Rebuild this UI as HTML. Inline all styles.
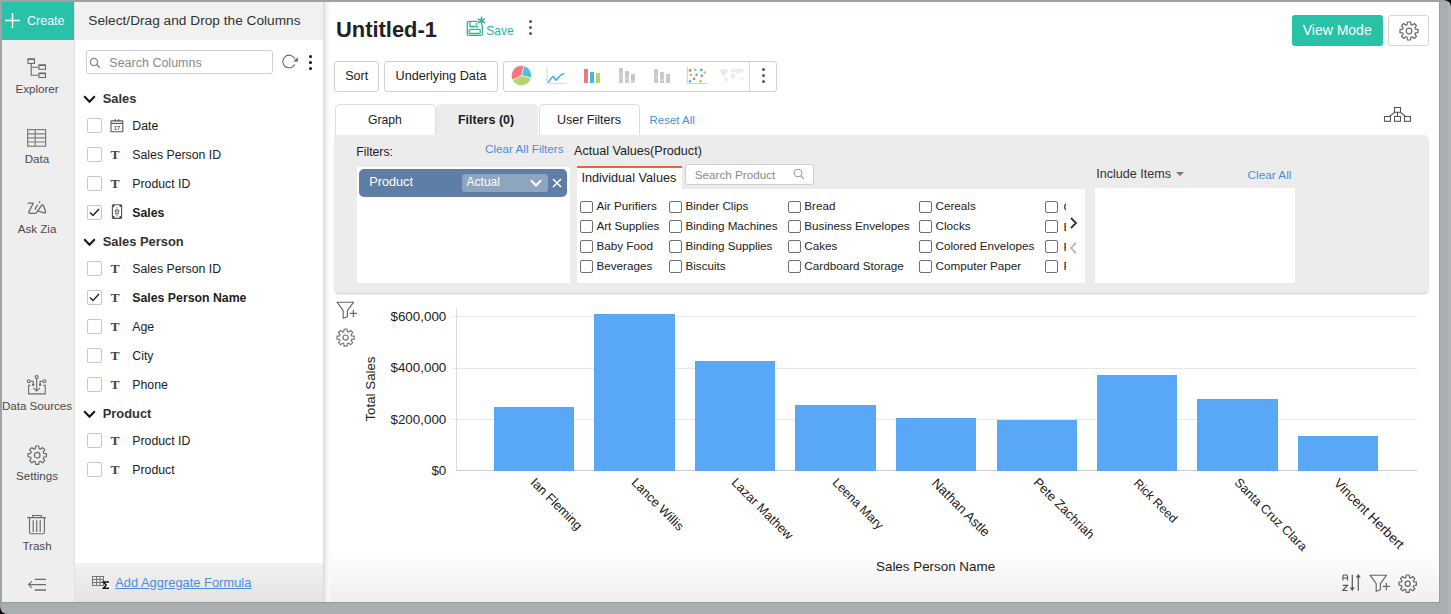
<!DOCTYPE html>
<html><head><meta charset="utf-8">
<style>
*{margin:0;padding:0;box-sizing:border-box}
html,body{width:1451px;height:614px;overflow:hidden}
body{background:#a8aeb1;position:relative;font-family:"Liberation Sans",sans-serif;color:#222}
.a{position:absolute}
.t{position:absolute;line-height:1;white-space:nowrap}
</style></head><body>
<div class="a" style="left:0px;top:0px;width:1451px;height:2px;background:#9da2a5"></div>
<div class="a" style="left:0px;top:0px;width:2px;height:614px;background:#9da2a5"></div>
<div class="a" style="left:1439px;top:2px;width:1px;height:601px;background:#9a9fa2"></div>
<div class="a" style="left:2px;top:602px;width:1438px;height:1px;background:#969c9f"></div>
<div class="a" style="left:1448px;top:2px;width:3px;height:612px;background:#aeb4b7"></div>
<div class="a" style="left:2px;top:2px;width:1437px;height:600px;background:#fff"></div>
<svg class="a" style="left:1441px;top:0px" width="10" height="10" viewBox="0 0 10 10"><path d="M3 0H10V7Q10 1 3 0Z" fill="#000"/></svg>
<svg class="a" style="left:0px;top:604px" width="10" height="10" viewBox="0 0 10 10"><path d="M0 3V10H7Q1 10 0 3Z" fill="#000"/></svg>
<div class="a" style="left:2px;top:2px;width:72px;height:600px;background:#eeeeee"></div>
<div class="a" style="left:74px;top:2px;width:1px;height:600px;background:#e0e0e0"></div>
<div class="a" style="left:2px;top:2px;width:72px;height:38px;background:#27c2a8"></div>
<svg class="a" style="left:5px;top:13px" width="15" height="15" viewBox="0 0 15 15"><path d="M7.5 0V15M0 7.5H15" stroke="#fff" stroke-width="1.5"/></svg>
<div class="t" style="left:27.00px;top:15.00px;font-size:12.5px;color:#fff;">Create</div>
<div class="t" style="left:-63.00px;width:200px;text-align:center;top:83.00px;font-size:11.6px;color:#4a4a4a;">Explorer</div>
<div class="t" style="left:-63.00px;width:200px;text-align:center;top:153.00px;font-size:11.6px;color:#4a4a4a;">Data</div>
<div class="t" style="left:-63.00px;width:200px;text-align:center;top:223.00px;font-size:11.6px;color:#4a4a4a;">Ask Zia</div>
<div class="t" style="left:-63.00px;width:200px;text-align:center;top:400.00px;font-size:11.6px;color:#4a4a4a;">Data Sources</div>
<div class="t" style="left:-63.00px;width:200px;text-align:center;top:470.00px;font-size:11.6px;color:#4a4a4a;">Settings</div>
<div class="t" style="left:-63.00px;width:200px;text-align:center;top:540.00px;font-size:11.6px;color:#4a4a4a;">Trash</div>
<svg class="a" style="left:22px;top:52px" width="30" height="30" viewBox="22 52 30 30" fill="none" stroke="#6b6b6b" stroke-width="1.1"><rect x="27.9" y="59" width="6.6" height="4.4"/><rect x="38.9" y="65" width="6.6" height="4.3"/><rect x="38.9" y="73.2" width="6.6" height="4.3"/><path d="M27.9 59.3H34.5M38.9 65.3H45.5M38.9 73.5H45.5" stroke-width="1.6"/><path d="M31.2 63.4V75.3H38.9M31.2 67.2H38.9"/></svg>
<svg class="a" style="left:22px;top:122px" width="30" height="30" viewBox="22 122 30 30" fill="none" stroke="#7c7c7c" stroke-width="1.2"><rect x="27.6" y="129.6" width="18" height="16.6"/><path d="M27.6 133.8H45.6M27.6 137.9H45.6M27.6 142H45.6M35.2 129.6V146.2"/></svg>
<svg class="a" style="left:0px;top:0px" width="60" height="230" viewBox="0 0 60 230" fill="none" stroke="#6b6b6b" stroke-width="1.3" stroke-linejoin="round" stroke-linecap="round"><path d="M28.2 203.2H33.3L28.9 211.6Q28.2 213.3 30.2 213.3H34.8Q36.3 213.3 37.3 211.6L41.6 205.3Q42.8 204 43.6 205.8L45.5 211.5Q45.9 213.4 44 212.9L37.9 211"/><path d="M35.6 209.3Q35.1 208.5 35.8 207.6L37.6 205"/><circle cx="39.5" cy="202.2" r="0.9" fill="#6b6b6b" stroke="none"/></svg>
<svg class="a" style="left:22px;top:370px" width="30" height="30" viewBox="22 370 30 30" fill="none" stroke="#6b6b6b" stroke-width="1.1"><circle cx="36.65" cy="377.1" r="1.5"/><circle cx="28.8" cy="381.3" r="1.5"/><circle cx="44.5" cy="381.3" r="1.5"/><path d="M36.65 378.6V391M33.4 387.9L36.65 391.1L39.9 387.9"/><path d="M30.3 381.3H33.2V384.7M43 381.3H40.1V384.7"/><circle cx="33.2" cy="384.8" r="0.7" fill="#6b6b6b"/><circle cx="40.1" cy="384.8" r="0.7" fill="#6b6b6b"/><path d="M30.4 385.4H28.6V393.9H45.2V385.4H43.4"/></svg>
<svg class="a" style="left:25.60px;top:443.60px" width="22.40" height="22.40" viewBox="0 0 22.40 22.40" fill="none" stroke="#6b6b6b" stroke-width="1.2" stroke-linejoin="round"><path d="M9.30 4.67L9.65 2.00L12.75 2.00L13.10 4.67A6.8 6.8 0 0 1 14.47 5.24L16.61 3.60L18.80 5.79L17.16 7.93A6.8 6.8 0 0 1 17.73 9.30L20.40 9.65L20.40 12.75L17.73 13.10A6.8 6.8 0 0 1 17.16 14.47L18.80 16.61L16.61 18.80L14.47 17.16A6.8 6.8 0 0 1 13.10 17.73L12.75 20.40L9.65 20.40L9.30 17.73A6.8 6.8 0 0 1 7.93 17.16L5.79 18.80L3.60 16.61L5.24 14.47A6.8 6.8 0 0 1 4.67 13.10L2.00 12.75L2.00 9.65L4.67 9.30A6.8 6.8 0 0 1 5.24 7.93L3.60 5.79L5.79 3.60L7.93 5.24A6.8 6.8 0 0 1 9.30 4.67Z"/><circle cx="11.2" cy="11.2" r="2.8"/></svg>
<svg class="a" style="left:22px;top:508px" width="30" height="30" viewBox="22 508 30 30" fill="none" stroke="#6b6b6b" stroke-width="1.1"><path d="M27.1 517.6H45.9M32.6 517.4V515.5H41.2V517.4M29.5 517.6V532.3Q29.5 533.8 31 533.8H43Q44.4 533.8 44.4 532.3V517.6"/><path d="M33.2 520.2V531.9M36.7 520.2V531.9M40.2 520.2V531.9" stroke-width="1.2"/></svg>
<svg class="a" style="left:22px;top:570px" width="30" height="30" viewBox="22 570 30 30" fill="none" stroke="#6b6b6b" stroke-width="1.2"><path d="M31.8 581.3L28.6 584.6L31.8 587.9M28.6 584.6H46M34.8 579.3H46"/><path d="M34.8 590H46" stroke-width="1.5"/></svg>
<div class="a" style="left:75px;top:2px;width:248px;height:38px;background:#f1f1f1"></div>
<div class="t" style="left:88.30px;top:14.00px;font-size:13.7px;color:#333;">Select/Drag and Drop the Columns</div>
<div class="a" style="left:86px;top:50px;width:187px;height:24px;border:1px solid #d0d0d0;border-radius:3px;background:#fff"></div>
<svg class="a" style="left:89px;top:57px" width="12" height="12" viewBox="0 0 12 12" fill="none" stroke="#888" stroke-width="1.4"><circle cx="5" cy="5" r="3.6"/><path d="M7.6 7.6L10.8 10.8"/></svg>
<div class="t" style="left:109.30px;top:57.00px;font-size:12.5px;color:#8a8a8a;">Search Columns</div>
<svg class="a" style="left:275px;top:50px" width="30" height="25" viewBox="275 50 30 25" fill="none" stroke="#666" stroke-width="1.1"><path d="M294.66 64.46A6.3 6.3 0 1 1 294.94 59.14"/><path d="M298 57.2L297.8 61.8L293.2 61.6Z" fill="#666" stroke="none"/></svg>
<div class="a" style="left:308.5px;top:54.5px;width:3.25px;height:3.25px;background:#111;border-radius:50%"></div>
<div class="a" style="left:308.5px;top:60.5px;width:3.25px;height:3.25px;background:#111;border-radius:50%"></div>
<div class="a" style="left:308.5px;top:66.5px;width:3.25px;height:3.25px;background:#111;border-radius:50%"></div>
<svg class="a" style="left:82.5px;top:95.0px" width="13" height="9" viewBox="0 0 13 9" fill="none" stroke="#111" stroke-width="2"><path d="M1.2 1.3L6.5 6.8L11.8 1.3"/></svg>
<div class="t" style="left:102.70px;top:93.00px;font-size:12.9px;color:#333;font-weight:bold;">Sales</div>
<svg class="a" style="left:82.5px;top:238.0px" width="13" height="9" viewBox="0 0 13 9" fill="none" stroke="#111" stroke-width="2"><path d="M1.2 1.3L6.5 6.8L11.8 1.3"/></svg>
<div class="t" style="left:102.70px;top:236.00px;font-size:12.9px;color:#333;font-weight:bold;">Sales Person</div>
<svg class="a" style="left:82.5px;top:410.0px" width="13" height="9" viewBox="0 0 13 9" fill="none" stroke="#111" stroke-width="2"><path d="M1.2 1.3L6.5 6.8L11.8 1.3"/></svg>
<div class="t" style="left:102.70px;top:408.00px;font-size:12.9px;color:#333;font-weight:bold;">Product</div>
<div class="a" style="left:87px;top:118px;width:15px;height:15px;border:1px solid #c8c8c8;border-radius:2px;background:#fff"></div>
<svg class="a" style="left:108px;top:118px" width="17" height="16" viewBox="0 0 17 16" fill="none" stroke="#555" stroke-width="1.1"><rect x="3" y="2.9" width="11.8" height="10.9" rx="0.6"/><path d="M3 5.4H14.8"/><path d="M7.3 1.2V3M10.5 1.2V3" stroke-width="1.3"/><text x="8.9" y="12.2" font-size="5.6" font-weight="bold" text-anchor="middle" fill="#555" stroke="none" font-family="Liberation Sans">17</text></svg>
<div class="t" style="left:132.30px;top:120.00px;font-size:12.3px;color:#222;">Date</div>
<div class="a" style="left:87px;top:147px;width:15px;height:15px;border:1px solid #c8c8c8;border-radius:2px;background:#fff"></div>
<div class="t" style="left:110.5px;top:148px;font-family:'Liberation Serif',serif;font-weight:bold;font-size:13.5px;color:#444">T</div>
<div class="t" style="left:132.30px;top:149.00px;font-size:12.3px;color:#222;">Sales Person ID</div>
<div class="a" style="left:87px;top:176px;width:15px;height:15px;border:1px solid #c8c8c8;border-radius:2px;background:#fff"></div>
<div class="t" style="left:110.5px;top:177px;font-family:'Liberation Serif',serif;font-weight:bold;font-size:13.5px;color:#444">T</div>
<div class="t" style="left:132.30px;top:178.00px;font-size:12.3px;color:#222;">Product ID</div>
<div class="a" style="left:87px;top:205px;width:15px;height:15px;border:1px solid #c8c8c8;border-radius:2px;background:#fff"></div>
<svg class="a" style="left:89px;top:208px" width="11" height="9" viewBox="0 0 11 9" fill="none" stroke="#222" stroke-width="1.4"><path d="M1 4.5L4 7.5L10 1"/></svg>
<svg class="a" style="left:108px;top:202px" width="17" height="18" viewBox="0 0 17 18" fill="none" stroke="#555" stroke-width="1.1"><rect x="4.4" y="2.8" width="9.2" height="13.6" rx="0.8"/><circle cx="5.6" cy="4" r="1.1" fill="#444" stroke="none"/><circle cx="12.4" cy="4" r="1.1" fill="#444" stroke="none"/><circle cx="5.6" cy="15.2" r="1.1" fill="#444" stroke="none"/><circle cx="12.4" cy="15.2" r="1.1" fill="#444" stroke="none"/><ellipse cx="9" cy="8.9" rx="1.9" ry="1.1"/><path d="M7 11.8H11M9 5.2V6.6M9 13.3V14.6"/></svg>
<div class="t" style="left:132.30px;top:207.00px;font-size:12.3px;color:#222;font-weight:bold;">Sales</div>
<div class="a" style="left:87px;top:261px;width:15px;height:15px;border:1px solid #c8c8c8;border-radius:2px;background:#fff"></div>
<div class="t" style="left:110.5px;top:262px;font-family:'Liberation Serif',serif;font-weight:bold;font-size:13.5px;color:#444">T</div>
<div class="t" style="left:132.30px;top:263.00px;font-size:12.3px;color:#222;">Sales Person ID</div>
<div class="a" style="left:87px;top:290px;width:15px;height:15px;border:1px solid #c8c8c8;border-radius:2px;background:#fff"></div>
<svg class="a" style="left:89px;top:293px" width="11" height="9" viewBox="0 0 11 9" fill="none" stroke="#222" stroke-width="1.4"><path d="M1 4.5L4 7.5L10 1"/></svg>
<div class="t" style="left:110.5px;top:291px;font-family:'Liberation Serif',serif;font-weight:bold;font-size:13.5px;color:#444">T</div>
<div class="t" style="left:132.30px;top:292.00px;font-size:12.3px;color:#222;font-weight:bold;">Sales Person Name</div>
<div class="a" style="left:87px;top:319px;width:15px;height:15px;border:1px solid #c8c8c8;border-radius:2px;background:#fff"></div>
<div class="t" style="left:110.5px;top:320px;font-family:'Liberation Serif',serif;font-weight:bold;font-size:13.5px;color:#444">T</div>
<div class="t" style="left:132.30px;top:321.00px;font-size:12.3px;color:#222;">Age</div>
<div class="a" style="left:87px;top:348px;width:15px;height:15px;border:1px solid #c8c8c8;border-radius:2px;background:#fff"></div>
<div class="t" style="left:110.5px;top:349px;font-family:'Liberation Serif',serif;font-weight:bold;font-size:13.5px;color:#444">T</div>
<div class="t" style="left:132.30px;top:350.00px;font-size:12.3px;color:#222;">City</div>
<div class="a" style="left:87px;top:377px;width:15px;height:15px;border:1px solid #c8c8c8;border-radius:2px;background:#fff"></div>
<div class="t" style="left:110.5px;top:378px;font-family:'Liberation Serif',serif;font-weight:bold;font-size:13.5px;color:#444">T</div>
<div class="t" style="left:132.30px;top:379.00px;font-size:12.3px;color:#222;">Phone</div>
<div class="a" style="left:87px;top:433px;width:15px;height:15px;border:1px solid #c8c8c8;border-radius:2px;background:#fff"></div>
<div class="t" style="left:110.5px;top:434px;font-family:'Liberation Serif',serif;font-weight:bold;font-size:13.5px;color:#444">T</div>
<div class="t" style="left:132.30px;top:435.00px;font-size:12.3px;color:#222;">Product ID</div>
<div class="a" style="left:87px;top:462px;width:15px;height:15px;border:1px solid #c8c8c8;border-radius:2px;background:#fff"></div>
<div class="t" style="left:110.5px;top:463px;font-family:'Liberation Serif',serif;font-weight:bold;font-size:13.5px;color:#444">T</div>
<div class="t" style="left:132.30px;top:464.00px;font-size:12.3px;color:#222;">Product</div>
<div class="a" style="left:75px;top:563px;width:248px;height:39px;background:linear-gradient(#f2f2f2,#e3e3e3)"></div>
<svg class="a" style="left:92px;top:576px" width="18" height="13" viewBox="0 0 18 13" fill="none" stroke="#777" stroke-width="1"><rect x="0.5" y="0.5" width="11" height="9"/><path d="M0.5 3.5H11.5M0.5 6.5H11.5M4.5 0.5V9.5M8 0.5V9.5"/><path d="M17 6H11.5L14.2 9L11.5 12.3H17" stroke="#111" stroke-width="1.5" fill="#fff"/></svg>
<div class="t" style="left:115.20px;top:577.00px;font-size:12.9px;color:#4a8ee0;text-decoration:underline">Add Aggregate Formula</div>
<div class="t" style="left:336.00px;top:19.00px;font-size:21.9px;color:#222;font-weight:bold;">Untitled-1</div>
<svg class="a" style="left:462px;top:14px" width="28" height="26" viewBox="0 0 28 26" fill="none" stroke="#2bb59b" stroke-width="1.3" stroke-linecap="round"><path d="M15.3 7.4H6.8Q5.3 7.4 5.3 8.9V19.9Q5.3 21.4 6.8 21.4H18.8Q20.3 21.4 20.3 19.9V11.2"/><path d="M8 7.6V12.5H15.7"/><rect x="7.2" y="15.3" width="11" height="4.2" rx="1"/><circle cx="14.6" cy="10" r="0.9" fill="#2bb59b" stroke="none"/><path d="M19.5 3.3V10.3M16.5 5.1L22.5 8.5M16.5 8.5L22.5 5.1" stroke-width="1.6"/></svg>
<div class="t" style="left:486.20px;top:25.00px;font-size:12.1px;color:#2bb59b;">Save</div>
<div class="a" style="left:529.2px;top:20px;width:3.0px;height:3px;background:#555;border-radius:50%"></div>
<div class="a" style="left:529.2px;top:26px;width:3.0px;height:3px;background:#555;border-radius:50%"></div>
<div class="a" style="left:529.2px;top:32px;width:3.0px;height:3px;background:#555;border-radius:50%"></div>
<div class="a" style="left:1292px;top:15px;width:91px;height:31px;background:#27c2a8;border-radius:3px"></div>
<div class="t" style="left:1302.70px;top:23.00px;font-size:14px;color:#fff;">View Mode</div>
<div class="a" style="left:1388px;top:15px;width:41px;height:31px;border:1px solid #d4d4d4;border-radius:3px;background:#fff"></div>
<svg class="a" style="left:1397.50px;top:19.50px" width="22.00" height="22.00" viewBox="0 0 22.00 22.00" fill="none" stroke="#666" stroke-width="1.2" stroke-linejoin="round"><path d="M9.10 4.68L9.45 2.00L12.55 2.00L12.90 4.68A6.6 6.6 0 0 1 14.13 5.19L16.27 3.54L18.46 5.73L16.81 7.87A6.6 6.6 0 0 1 17.32 9.10L20.00 9.45L20.00 12.55L17.32 12.90A6.6 6.6 0 0 1 16.81 14.13L18.46 16.27L16.27 18.46L14.13 16.81A6.6 6.6 0 0 1 12.90 17.32L12.55 20.00L9.45 20.00L9.10 17.32A6.6 6.6 0 0 1 7.87 16.81L5.73 18.46L3.54 16.27L5.19 14.13A6.6 6.6 0 0 1 4.68 12.90L2.00 12.55L2.00 9.45L4.68 9.10A6.6 6.6 0 0 1 5.19 7.87L3.54 5.73L5.73 3.54L7.87 5.19A6.6 6.6 0 0 1 9.10 4.68Z"/><circle cx="11.0" cy="11.0" r="2.8"/></svg>
<div class="a" style="left:334px;top:61px;width:45px;height:30.5px;border:1px solid #d2d2d2;border-radius:3px;background:#fff"></div>
<div class="t" style="left:345.20px;top:70.00px;font-size:12.6px;color:#222;">Sort</div>
<div class="a" style="left:384px;top:61px;width:113.5px;height:30.5px;border:1px solid #d2d2d2;border-radius:3px;background:#fff"></div>
<div class="t" style="left:395.50px;top:70.00px;font-size:12.7px;color:#222;">Underlying Data</div>
<div class="a" style="left:503px;top:61px;width:274px;height:30.5px;border:1px solid #d2d2d2;border-radius:3px;background:#fff"></div>
<div class="a" style="left:749px;top:62px;width:1px;height:29px;background:#d8d8d8"></div>
<div class="a" style="left:761.5px;top:68px;width:3.0px;height:3px;background:#555;border-radius:50%"></div>
<div class="a" style="left:761.5px;top:74px;width:3.0px;height:3px;background:#555;border-radius:50%"></div>
<div class="a" style="left:761.5px;top:80px;width:3.0px;height:3px;background:#555;border-radius:50%"></div>
<svg class="a" style="left:511px;top:65px" width="21" height="21" viewBox="0 0 21 21"><path d="M10.5 10.5L12.92 0.80A10 10 0 0 1 20.11 13.26Z" fill="#4fc0da" stroke="#fff" stroke-width="0.6"/><path d="M10.5 10.5L20.11 13.26A10 10 0 0 1 1.67 15.19Z" fill="#b6d36b" stroke="#fff" stroke-width="0.6"/><path d="M10.5 10.5L1.67 15.19A10 10 0 0 1 12.92 0.80Z" fill="#ee7a7f" stroke="#fff" stroke-width="0.6"/></svg>
<svg class="a" style="left:546px;top:66px" width="21" height="19" viewBox="0 0 21 19" fill="none"><path d="M1 1V17.5H20.5" stroke="#dcdcdc" stroke-width="1.2"/><path d="M2.3 16L6.9 10.4L10.2 14.1L14.8 9L17.8 7.6" stroke="#45b9d8" stroke-width="1.6" stroke-linejoin="round" stroke-linecap="round"/></svg>
<div class="a" style="left:584px;top:68.5px;width:4px;height:14.5px;background:#ee7a7f"></div>
<div class="a" style="left:590px;top:71.8px;width:4px;height:11.200000000000003px;background:#45b9d8"></div>
<div class="a" style="left:596px;top:73.3px;width:4px;height:9.700000000000003px;background:#b6d36b"></div>
<div class="a" style="left:619px;top:68px;width:4px;height:15px;background:repeating-linear-gradient(#c8c8c8 0 1.6px,#dadada 1.6px 2.2px)"></div>
<div class="a" style="left:625px;top:71px;width:4px;height:12px;background:repeating-linear-gradient(#c8c8c8 0 1.6px,#dadada 1.6px 2.2px)"></div>
<div class="a" style="left:631px;top:74px;width:4px;height:9px;background:repeating-linear-gradient(#c8c8c8 0 1.6px,#dadada 1.6px 2.2px)"></div>
<div class="a" style="left:654px;top:68.5px;width:4px;height:14.200000000000003px;background:#c9c9c9"></div>
<div class="a" style="left:660px;top:72px;width:4px;height:10.700000000000003px;background:#c9c9c9"></div>
<div class="a" style="left:666px;top:73.6px;width:4px;height:9.100000000000009px;background:#c9c9c9"></div>
<svg class="a" style="left:653px;top:73px" width="18" height="10" viewBox="0 0 18 10" fill="none" stroke="#e8e8e8" stroke-width="0.9"><path d="M2.5 2.5L9 8L15 2.5"/></svg>
<svg class="a" style="left:686px;top:66px" width="22" height="19" viewBox="0 0 22 19"><path d="M1.3 1V17.6H20.5" fill="none" stroke="#cfcfcf" stroke-width="1"/><circle cx="4.0" cy="4.4" r="1.3" fill="#ee6a70"/><circle cx="9.2" cy="3.7" r="1.3" fill="#a8cc4a"/><circle cx="15.3" cy="3.9" r="1.3" fill="#3db4dc"/><circle cx="18.7" cy="6.5" r="1.3" fill="#a8cc4a"/><circle cx="4.9" cy="9.0" r="1.3" fill="#a8cc4a"/><circle cx="10.6" cy="8.7" r="1.3" fill="#3db4dc"/><circle cx="15.7" cy="9.7" r="1.3" fill="#ee6a70"/><circle cx="8.1" cy="12.9" r="1.3" fill="#ee6a70"/><circle cx="4.0" cy="15.3" r="1.3" fill="#3db4dc"/><circle cx="14.5" cy="15.3" r="1.3" fill="#a8cc4a"/></svg>
<svg class="a" style="left:719px;top:68px" width="26" height="15" viewBox="0 0 26 15" fill="#ececec"><path d="M0 2Q4 0 8 1L9 3L7 6L5 7L6 9L4 8L2 5Z"/><path d="M5 9L8 9.5L9 12L7 14.5L6 12Z"/><path d="M11 2L14 1L16 3L14 5L12 4Z"/><path d="M12 6L15 6L16 9L14 12L12 9Z"/><path d="M15 1L22 0.5L25.5 2.5L23 5L21 4L19 6L17 5L16 3Z"/><path d="M21 10L24 9.5L24.5 12L22 12.5Z"/></svg>
<div class="a" style="left:334.5px;top:104px;width:101.5px;height:32px;border:1px solid #dcdcdc;border-bottom:none;border-radius:5px 5px 0 0;background:#fff"></div>
<div class="a" style="left:435.5px;top:104px;width:102.5px;height:32px;border-radius:5px 5px 0 0;background:#ececec"></div>
<div class="a" style="left:538.5px;top:104px;width:101.5px;height:32px;border:1px solid #dcdcdc;border-bottom:none;border-radius:5px 5px 0 0;background:#fff"></div>
<div class="t" style="left:368.00px;top:114.00px;font-size:12.2px;color:#222;">Graph</div>
<div class="t" style="left:457.90px;top:114.00px;font-size:12.5px;color:#222;font-weight:bold;">Filters (0)</div>
<div class="t" style="left:557.00px;top:114.00px;font-size:12.5px;color:#222;">User Filters</div>
<div class="t" style="left:649.50px;top:115.00px;font-size:11.5px;color:#4a8ee0;">Reset All</div>
<svg class="a" style="left:1383px;top:106px" width="29" height="17" viewBox="0 0 29 17" fill="none" stroke="#555" stroke-width="1.1"><rect x="11.5" y="1.5" width="6" height="4.8"/><rect x="1.5" y="10.5" width="6" height="4.8"/><rect x="11.5" y="10.5" width="6" height="4.8"/><rect x="21.5" y="10.5" width="6" height="4.8"/><path d="M14.5 6.3V10.5M11.5 6.3L6.5 10.5M17.5 6.3L22.5 10.5"/></svg>
<div class="a" style="left:334px;top:135px;width:1095px;height:158px;background:#ececec;border-radius:0 5px 5px 5px;box-shadow:0 2px 2px -1px rgba(0,0,0,0.22)"></div>
<div class="t" style="left:356.30px;top:146.00px;font-size:12.2px;color:#222;">Filters:</div>
<div class="t" style="left:485.00px;top:143.00px;font-size:11.7px;color:#4a8ee0;">Clear All Filters</div>
<div class="t" style="left:574.00px;top:145.00px;font-size:12.6px;color:#222;">Actual Values(Product)</div>
<div class="a" style="left:357px;top:167px;width:212.5px;height:116px;background:#fff"></div>
<div class="a" style="left:359px;top:169px;width:208px;height:28px;background:#5f7ea6;border-radius:5px"></div>
<div class="t" style="left:369.20px;top:176.00px;font-size:12.7px;color:#fff;">Product</div>
<div class="a" style="left:462px;top:174.2px;width:86px;height:17.600000000000023px;background:#8ea5bf;border-radius:3px"></div>
<div class="t" style="left:466.60px;top:176.00px;font-size:12px;color:#fff;">Actual</div>
<svg class="a" style="left:530px;top:179px" width="12" height="8" viewBox="0 0 12 8" fill="none" stroke="#fff" stroke-width="2.1"><path d="M1 1.2L6 6.5L11 1.2"/></svg>
<svg class="a" style="left:552px;top:177.5px" width="10" height="10" viewBox="0 0 10 10" fill="none" stroke="#fff" stroke-width="1.6"><path d="M1 1L9 9M9 1L1 9"/></svg>
<div class="a" style="left:576.5px;top:166px;width:105.0px;height:24px;background:#fff;border-top:2px solid #e8653a"></div>
<div class="t" style="left:581.40px;top:172.00px;font-size:12.7px;color:#222;">Individual Values</div>
<div class="a" style="left:685.4px;top:164px;width:129.0px;height:21px;border:1px solid #cfcfcf;border-radius:3px;background:#fff"></div>
<div class="t" style="left:694.80px;top:169.00px;font-size:11.7px;color:#8a8a8a;">Search Product</div>
<svg class="a" style="left:793px;top:168px" width="12" height="12" viewBox="0 0 12 12" fill="none" stroke="#999" stroke-width="1.1"><circle cx="5" cy="5" r="3.8"/><path d="M7.8 7.8L10.8 10.8"/></svg>
<div class="a" style="left:576.5px;top:189px;width:508.0px;height:93.5px;background:#fff"></div>
<div class="a" style="left:580.3px;top:200.5px;width:12.5px;height:12.5px;border:1px solid #707070;border-radius:2px;background:#fff"></div>
<div class="t" style="left:596.40px;top:200.00px;font-size:11.7px;color:#222;">Air Purifiers</div>
<div class="a" style="left:580.3px;top:220.35px;width:12.5px;height:12.5px;border:1px solid #707070;border-radius:2px;background:#fff"></div>
<div class="t" style="left:596.40px;top:220.00px;font-size:11.7px;color:#222;">Art Supplies</div>
<div class="a" style="left:580.3px;top:240.2px;width:12.5px;height:12.5px;border:1px solid #707070;border-radius:2px;background:#fff"></div>
<div class="t" style="left:596.40px;top:240.00px;font-size:11.7px;color:#222;">Baby Food</div>
<div class="a" style="left:580.3px;top:260.05px;width:12.5px;height:12.5px;border:1px solid #707070;border-radius:2px;background:#fff"></div>
<div class="t" style="left:596.40px;top:260.00px;font-size:11.7px;color:#222;">Beverages</div>
<div class="a" style="left:669.3px;top:200.5px;width:12.5px;height:12.5px;border:1px solid #707070;border-radius:2px;background:#fff"></div>
<div class="t" style="left:685.40px;top:200.00px;font-size:11.7px;color:#222;">Binder Clips</div>
<div class="a" style="left:669.3px;top:220.35px;width:12.5px;height:12.5px;border:1px solid #707070;border-radius:2px;background:#fff"></div>
<div class="t" style="left:685.40px;top:220.00px;font-size:11.7px;color:#222;">Binding Machines</div>
<div class="a" style="left:669.3px;top:240.2px;width:12.5px;height:12.5px;border:1px solid #707070;border-radius:2px;background:#fff"></div>
<div class="t" style="left:685.40px;top:240.00px;font-size:11.7px;color:#222;">Binding Supplies</div>
<div class="a" style="left:669.3px;top:260.05px;width:12.5px;height:12.5px;border:1px solid #707070;border-radius:2px;background:#fff"></div>
<div class="t" style="left:685.40px;top:260.00px;font-size:11.7px;color:#222;">Biscuits</div>
<div class="a" style="left:788.2px;top:200.5px;width:12.5px;height:12.5px;border:1px solid #707070;border-radius:2px;background:#fff"></div>
<div class="t" style="left:804.30px;top:200.00px;font-size:11.7px;color:#222;">Bread</div>
<div class="a" style="left:788.2px;top:220.35px;width:12.5px;height:12.5px;border:1px solid #707070;border-radius:2px;background:#fff"></div>
<div class="t" style="left:804.30px;top:220.00px;font-size:11.7px;color:#222;">Business Envelopes</div>
<div class="a" style="left:788.2px;top:240.2px;width:12.5px;height:12.5px;border:1px solid #707070;border-radius:2px;background:#fff"></div>
<div class="t" style="left:804.30px;top:240.00px;font-size:11.7px;color:#222;">Cakes</div>
<div class="a" style="left:788.2px;top:260.05px;width:12.5px;height:12.5px;border:1px solid #707070;border-radius:2px;background:#fff"></div>
<div class="t" style="left:804.30px;top:260.00px;font-size:11.7px;color:#222;">Cardboard Storage</div>
<div class="a" style="left:919.4px;top:200.5px;width:12.5px;height:12.5px;border:1px solid #707070;border-radius:2px;background:#fff"></div>
<div class="t" style="left:935.50px;top:200.00px;font-size:11.7px;color:#222;">Cereals</div>
<div class="a" style="left:919.4px;top:220.35px;width:12.5px;height:12.5px;border:1px solid #707070;border-radius:2px;background:#fff"></div>
<div class="t" style="left:935.50px;top:220.00px;font-size:11.7px;color:#222;">Clocks</div>
<div class="a" style="left:919.4px;top:240.2px;width:12.5px;height:12.5px;border:1px solid #707070;border-radius:2px;background:#fff"></div>
<div class="t" style="left:935.50px;top:240.00px;font-size:11.7px;color:#222;">Colored Envelopes</div>
<div class="a" style="left:919.4px;top:260.05px;width:12.5px;height:12.5px;border:1px solid #707070;border-radius:2px;background:#fff"></div>
<div class="t" style="left:935.50px;top:260.00px;font-size:11.7px;color:#222;">Computer Paper</div>
<div class="a" style="left:1045.3px;top:200.5px;width:12.5px;height:12.5px;border:1px solid #707070;border-radius:2px;background:#fff"></div>
<div class="a" style="left:1045.3px;top:220.35px;width:12.5px;height:12.5px;border:1px solid #707070;border-radius:2px;background:#fff"></div>
<div class="a" style="left:1045.3px;top:240.2px;width:12.5px;height:12.5px;border:1px solid #707070;border-radius:2px;background:#fff"></div>
<div class="a" style="left:1045.3px;top:260.05px;width:12.5px;height:12.5px;border:1px solid #707070;border-radius:2px;background:#fff"></div>
<div class="a" style="left:1063.5px;top:197.5px;width:2.5px;height:18px;overflow:hidden"><div class="t" style="left:0;top:3.40px;font-size:11.7px;color:#222">C</div></div>
<div class="a" style="left:1063.5px;top:217.35px;width:2.5px;height:18px;overflow:hidden"><div class="t" style="left:0;top:3.40px;font-size:11.7px;color:#222">B</div></div>
<div class="a" style="left:1063.5px;top:237.2px;width:2.5px;height:18px;overflow:hidden"><div class="t" style="left:0;top:3.40px;font-size:11.7px;color:#222">F</div></div>
<div class="a" style="left:1063.5px;top:257.05px;width:2.5px;height:18px;overflow:hidden"><div class="t" style="left:0;top:3.40px;font-size:11.7px;color:#222">F</div></div>
<svg class="a" style="left:1069px;top:217px" width="9" height="12" viewBox="0 0 9 12" fill="none" stroke="#333" stroke-width="1.8"><path d="M2 1L7 6L2 11"/></svg>
<svg class="a" style="left:1069px;top:241.5px" width="9" height="12" viewBox="0 0 9 12" fill="none" stroke="#bbb" stroke-width="1.8"><path d="M7 1L2 6L7 11"/></svg>
<div class="t" style="left:1096.20px;top:168.00px;font-size:12.6px;color:#333;">Include Items</div>
<svg class="a" style="left:1175.5px;top:172px" width="8" height="4" viewBox="0 0 8 4"><path d="M0 0H8L4 4Z" fill="#777"/></svg>
<div class="t" style="left:1247.50px;top:170.00px;font-size:11.8px;color:#4a8ee0;">Clear All</div>
<div class="a" style="left:1095px;top:188px;width:200px;height:95px;background:#fff"></div>
<div class="a" style="left:326px;top:550px;width:1113px;height:52px;background:linear-gradient(#fff,#efefef)"></div>
<svg class="a" style="left:336.4px;top:301px" width="23" height="19" viewBox="0 0 23 19" fill="none" stroke="#666" stroke-width="1.15" stroke-linejoin="round"><path d="M1 1.2H17.6L11.4 9.7V15.8L7.2 17.2V9.7Z"/><path d="M17.3 8.7V16.2M13.7 12.4H20.9"/></svg>
<svg class="a" style="left:335.30px;top:327.00px" width="21.20" height="21.20" viewBox="0 0 21.20 21.20" fill="none" stroke="#777" stroke-width="1.2" stroke-linejoin="round"><path d="M8.80 4.56L9.15 2.00L12.05 2.00L12.40 4.56A6.3 6.3 0 0 1 13.60 5.06L15.66 3.49L17.71 5.54L16.14 7.60A6.3 6.3 0 0 1 16.64 8.80L19.20 9.15L19.20 12.05L16.64 12.40A6.3 6.3 0 0 1 16.14 13.60L17.71 15.66L15.66 17.71L13.60 16.14A6.3 6.3 0 0 1 12.40 16.64L12.05 19.20L9.15 19.20L8.80 16.64A6.3 6.3 0 0 1 7.60 16.14L5.54 17.71L3.49 15.66L5.06 13.60A6.3 6.3 0 0 1 4.56 12.40L2.00 12.05L2.00 9.15L4.56 8.80A6.3 6.3 0 0 1 5.06 7.60L3.49 5.54L5.54 3.49L7.60 5.06A6.3 6.3 0 0 1 8.80 4.56Z"/><circle cx="10.6" cy="10.6" r="2.6"/></svg>
<div class="t" style="right:1004.70px;text-align:right;top:310.00px;font-size:13.4px;color:#222;">$600,000</div>
<div class="t" style="right:1004.70px;text-align:right;top:361.00px;font-size:13.4px;color:#222;">$400,000</div>
<div class="t" style="right:1004.70px;text-align:right;top:413.00px;font-size:13.4px;color:#222;">$200,000</div>
<div class="t" style="right:1004.70px;text-align:right;top:464.00px;font-size:13.4px;color:#222;">$0</div>
<div class="a" style="left:452px;top:316px;width:965px;height:1px;background:#e8e8e8"></div>
<div class="a" style="left:452px;top:367.5px;width:965px;height:1.0px;background:#e8e8e8"></div>
<div class="a" style="left:452px;top:419px;width:965px;height:1px;background:#e8e8e8"></div>
<div class="a" style="left:456px;top:470px;width:961px;height:1px;background:#cfcfcf"></div>
<div class="a" style="left:455.5px;top:308px;width:1.0px;height:163px;background:#dcdcdc"></div>
<div class="t" style="left:371.4px;top:389.4px;font-size:13.3px;color:#222;transform:translate(-50%,-50%) rotate(-90deg)">Total Sales</div>
<div class="a" style="left:494px;top:407px;width:80px;height:64px;background:#58a8f7"></div>
<div class="a" style="left:594px;top:314px;width:81px;height:157px;background:#58a8f7"></div>
<div class="a" style="left:695px;top:361px;width:80px;height:110px;background:#58a8f7"></div>
<div class="a" style="left:795px;top:405px;width:81px;height:66px;background:#58a8f7"></div>
<div class="a" style="left:896px;top:418px;width:80px;height:53px;background:#58a8f7"></div>
<div class="a" style="left:997px;top:420px;width:80px;height:51px;background:#58a8f7"></div>
<div class="a" style="left:1097px;top:375px;width:80px;height:96px;background:#58a8f7"></div>
<div class="a" style="left:1197px;top:399px;width:81px;height:72px;background:#58a8f7"></div>
<div class="a" style="left:1298px;top:436px;width:80px;height:35px;background:#58a8f7"></div>
<div class="a" style="left:529.40px;top:484px;width:0;height:0;transform:rotate(45deg);transform-origin:0 0"><div class="t" style="left:0;top:-10.86px;font-size:12.83px;color:#222">Ian Fleming</div></div>
<div class="a" style="left:629.85px;top:484px;width:0;height:0;transform:rotate(45deg);transform-origin:0 0"><div class="t" style="left:0;top:-10.80px;font-size:12.76px;color:#222">Lance Willis</div></div>
<div class="a" style="left:730.35px;top:484px;width:0;height:0;transform:rotate(45deg);transform-origin:0 0"><div class="t" style="left:0;top:-10.89px;font-size:12.87px;color:#222">Lazar Mathew</div></div>
<div class="a" style="left:830.95px;top:484px;width:0;height:0;transform:rotate(45deg);transform-origin:0 0"><div class="t" style="left:0;top:-10.62px;font-size:12.55px;color:#222">Leena Mary</div></div>
<div class="a" style="left:931.10px;top:484px;width:0;height:0;transform:rotate(45deg);transform-origin:0 0"><div class="t" style="left:0;top:-11.33px;font-size:13.39px;color:#222">Nathan Astle</div></div>
<div class="a" style="left:1032.20px;top:484px;width:0;height:0;transform:rotate(45deg);transform-origin:0 0"><div class="t" style="left:0;top:-10.88px;font-size:12.85px;color:#222">Pete Zachriah</div></div>
<div class="a" style="left:1132.55px;top:484px;width:0;height:0;transform:rotate(45deg);transform-origin:0 0"><div class="t" style="left:0;top:-10.23px;font-size:12.08px;color:#222">Rick Reed</div></div>
<div class="a" style="left:1232.90px;top:484px;width:0;height:0;transform:rotate(45deg);transform-origin:0 0"><div class="t" style="left:0;top:-10.67px;font-size:12.61px;color:#222">Santa Cruz Clara</div></div>
<div class="a" style="left:1333.45px;top:484px;width:0;height:0;transform:rotate(45deg);transform-origin:0 0"><div class="t" style="left:0;top:-11.35px;font-size:13.41px;color:#222">Vincent Herbert</div></div>
<div class="t" style="left:876.00px;top:560.00px;font-size:13.4px;color:#222;">Sales Person Name</div>
<svg class="a" style="left:1340px;top:572px" width="22" height="21" viewBox="0 0 22 21" fill="none" stroke="#555" stroke-width="1.2"><path d="M2.9 8.6V4.3Q2.9 3 4.3 3H6.2Q7.5 3 7.5 4.3V8.6M2.9 6H7.5" stroke-width="1.15"/><path d="M2.8 13.4H7.4L2.8 18.5H7.6" stroke-width="1.2"/><path d="M12.3 2.8V16.5M18.3 4.5V18.8"/><path d="M9.8 15.6H14.8L12.3 18.9Z M15.8 5.4H20.8L18.3 2.1Z" fill="#555" stroke="none"/></svg>
<svg class="a" style="left:1369px;top:574.2px" width="23" height="19" viewBox="0 0 23 19" fill="none" stroke="#666" stroke-width="1.15" stroke-linejoin="round"><path d="M1 1.2H17.6L11.4 9.7V15.8L7.2 17.2V9.7Z"/><path d="M17.3 8.7V16.2M13.7 12.4H20.9"/></svg>
<svg class="a" style="left:1397.30px;top:573.10px" width="21.40" height="21.40" viewBox="0 0 21.40 21.40" fill="none" stroke="#666" stroke-width="1.2" stroke-linejoin="round"><path d="M8.90 4.56L9.20 2.00L12.20 2.00L12.50 4.56A6.4 6.4 0 0 1 13.77 5.08L15.79 3.49L17.91 5.61L16.32 7.63A6.4 6.4 0 0 1 16.84 8.90L19.40 9.20L19.40 12.20L16.84 12.50A6.4 6.4 0 0 1 16.32 13.77L17.91 15.79L15.79 17.91L13.77 16.32A6.4 6.4 0 0 1 12.50 16.84L12.20 19.40L9.20 19.40L8.90 16.84A6.4 6.4 0 0 1 7.63 16.32L5.61 17.91L3.49 15.79L5.08 13.77A6.4 6.4 0 0 1 4.56 12.50L2.00 12.20L2.00 9.20L4.56 8.90A6.4 6.4 0 0 1 5.08 7.63L3.49 5.61L5.61 3.49L7.63 5.08A6.4 6.4 0 0 1 8.90 4.56Z"/><circle cx="10.7" cy="10.7" r="2.6"/></svg>
<div class="a" style="left:323px;top:2px;width:8px;height:600px;background:linear-gradient(to right,#d9d9d9,#ececec 30%,#fafafa 70%,rgba(255,255,255,0))"></div>
</body></html>
